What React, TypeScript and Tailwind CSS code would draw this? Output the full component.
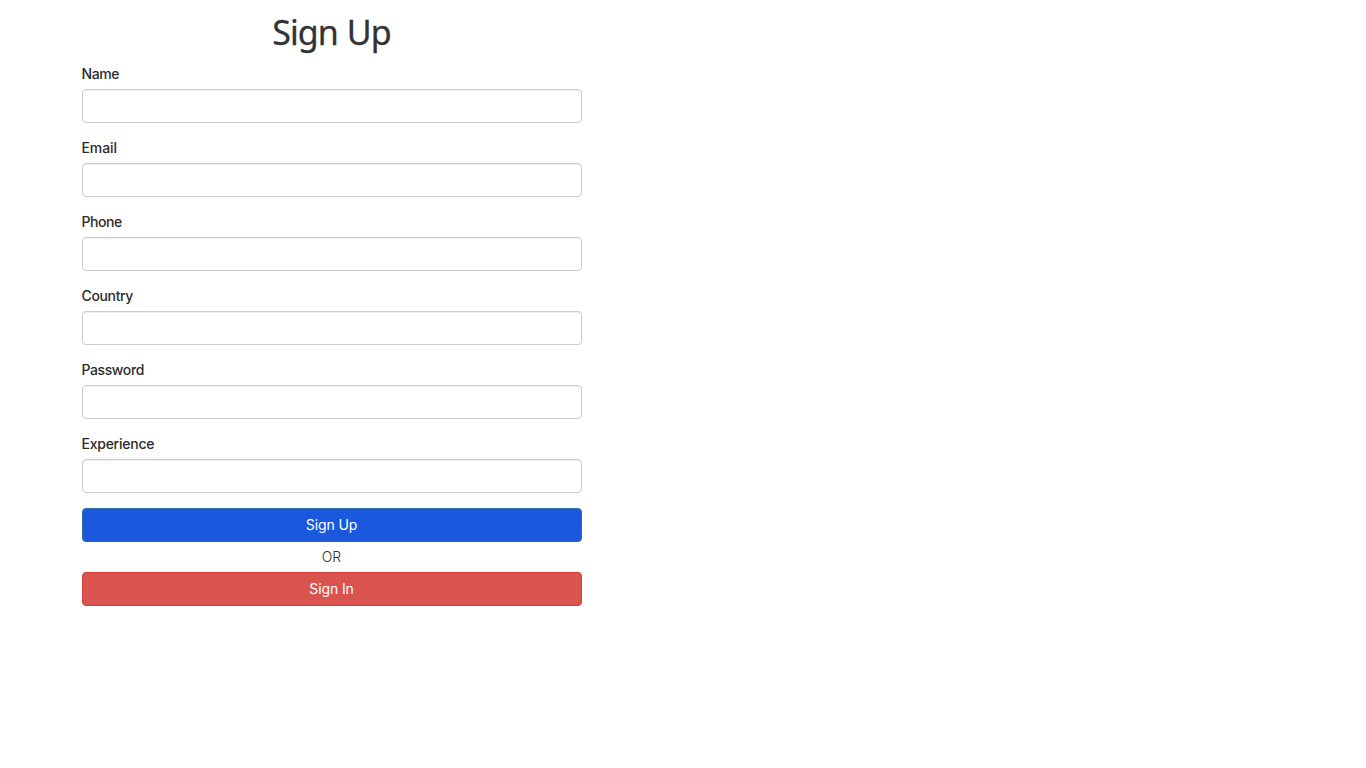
import React from "react";

const fields: { name: string; type: string; spacing: string }[] = [
  { name: "Name", type: "text", spacing: "tracking-[-0.4px]" },
  { name: "Email", type: "email", spacing: "tracking-[-0.1px]" },
  { name: "Phone", type: "tel", spacing: "tracking-[-0.45px]" },
  { name: "Country", type: "text", spacing: "tracking-[-0.35px]" },
  { name: "Password", type: "password", spacing: "tracking-[-0.4px]" },
  { name: "Experience", type: "text", spacing: "tracking-[-0.25px]" },
];

export default function App() {
  return (
    <main className="min-h-screen bg-white pl-[82px] font-['Inter',sans-serif] text-sm leading-5 text-[#333]">
      <form className="w-[500px] pt-3">
        <h1 className="mb-3 pr-px text-center font-['Noto_Sans',sans-serif] text-[34px] leading-10 tracking-[-0.9px] text-[#333] [word-spacing:1px] [-webkit-text-stroke:0.3px_#333]">Sign Up</h1>
        {fields.map((f) => (
          <div key={f.name} className="mb-[15px]">
            <label htmlFor={f.name} className={`-ml-[0.5px] mb-[5px] block h-5 font-medium text-[#2b2b2b] ${f.spacing}`}>
              <span>{f.name}</span>
            </label>
            <input
              id={f.name}
              type={f.type}
              className="block h-[34px] w-full rounded border border-[#ccc] bg-white px-3 shadow-[inset_0_1px_1px_rgba(0,0,0,0.075)] outline-none"
            />
          </div>
        ))}
        <button type="button" className="block h-[34px] w-full rounded border border-[#2e6da4] bg-[#1a59dd] pr-px tracking-[-0.1px] text-white">
          <span>Sign Up</span>
        </button>
        <p className="my-[5px] pr-px text-center font-light">
          <span>OR</span>
        </p>
        <button type="button" className="block h-[34px] w-full rounded border border-[#d43f3a] bg-[#d9534f] pr-px tracking-[-0.1px] text-white">
          <span>Sign In</span>
        </button>
      </form>
    </main>
  );
}
